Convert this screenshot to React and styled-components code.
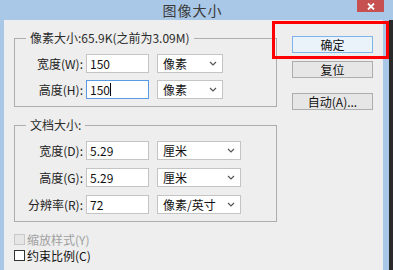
import styled, { createGlobalStyle } from 'styled-components';

const GlobalStyle = createGlobalStyle`
    html, body {
        margin: 0;
        padding: 0;
        background: #a9c7e6;
        font-family: "Noto Sans CJK SC", "Noto Sans", sans-serif;
    }
`

// finestra del dialogo
const Window = styled.div`
    position: relative;
    width: 393px;
    height: 270px;
    overflow: hidden;
    background: #a9c7e6;
    display: flex;
    flex-direction: column;
`
const TitleBar = styled.div`
    height: 20px;
    display: flex;
    align-items: center;
    justify-content: center;
    position: relative;
    font-size: 14px;
    color: #3a3a3a;
    letter-spacing: 1px;
    padding-right: 8px;
`
const CloseButton = styled.div`
    position: absolute;
    top: 0;
    left: 357px;
    width: 27px;
    height: 12px;
    background: #c75050;
    display: flex;
    align-items: center;
    justify-content: center;
`
const Frame = styled.div`
    flex: 1;
    display: flex;
`
const Body = styled.div`
    margin-left: 4px;
    width: 379px;
    background: #eeeeee;
    display: flex;
    padding: 11px 0 0 10px;
    box-sizing: border-box;
`
const RightEdge = styled.div`
    width: 6px;
    background: #a9c7e6;
    border-right: 4px solid #2a2a2a;
`
const LeftColumn = styled.div`
    width: 263px;
    display: flex;
    flex-direction: column;
`
const Group = styled.fieldset`
    margin: 0 0 ${p => p.$gap || 0}px 0;
    padding: 9px 0 7px 0;
    border: 1px solid #adadad;
    display: flex;
    flex-direction: column;
    gap: ${p => p.$rowGap}px;
`
const Legend = styled.legend`
    margin-left: 11px;
    padding: 0 4px;
    font-size: 12px;
    line-height: 14px;
    color: #2b2b2b;
`
const Row = styled.div`
    display: flex;
    align-items: center;
    height: 19px;
`
const Label = styled.div`
    width: 68px;
    text-align: right;
    font-size: 12px;
    color: #222;
    padding-right: 3px;
`
const Input = styled.div`
    width: 63px;
    height: 19px;
    box-sizing: border-box;
    background: #fff;
    border: 1px solid ${p => (p.$focus ? '#5a9ae0' : '#c4c4c4')};
    font-size: 12px;
    line-height: 17px;
    padding-left: 3px;
    color: #111;
    display: flex;
    align-items: center;
`
const Caret = styled.span`
    display: inline-block;
    width: 1px;
    height: 13px;
    background: #000;
`
const Select = styled.div`
    margin-left: 8px;
    width: ${p => p.$w}px;
    height: 19px;
    box-sizing: border-box;
    background: #fff;
    border: 1px solid #c4c4c4;
    font-size: 12px;
    padding: 0 5px 0 5px;
    display: flex;
    align-items: center;
    justify-content: space-between;
    color: #111;
`
const Check = styled.label`
    display: flex;
    align-items: center;
    height: 16px;
    font-size: 12px;
    color: ${p => (p.$disabled ? '#a0a0a0' : '#111')};
`
const Box = styled.span`
    width: 11px;
    height: 11px;
    box-sizing: border-box;
    border: 1px solid ${p => (p.$disabled ? '#c8c8c8' : '#333')};
    background: ${p => (p.$disabled ? '#e6e6e6' : '#fff')};
    margin: 0 2px 0 0;
`
const RightColumn = styled.div`
    margin-left: 15px;
    padding-top: 5px;
    display: flex;
    flex-direction: column;
`
const Button = styled.div`
    width: 81px;
    height: 17px;
    box-sizing: border-box;
    border: 1px solid ${p => (p.$primary ? '#7eb4ea' : '#adadad')};
    background: ${p => (p.$primary ? '#eaf2fa' : '#e6e6e6')};
    font-size: 12px;
    line-height: 15px;
    text-align: center;
    color: #111;
    margin-bottom: ${p => p.$mb}px;
`
const Highlight = styled.div`
    position: absolute;
    left: 272px;
    top: 21px;
    width: 117px;
    height: 38px;
    box-sizing: border-box;
    border: 3px solid #f00;
    pointer-events: none;
`

function Chevron() {
    return (
        <svg width="8" height="5" viewBox="0 0 8 5">
            <path d="M1 1 L4 4 L7 1" fill="none" stroke="#555" strokeWidth="1.2" />
        </svg>
    )
}

function CloseIcon() {
    return (
        <svg width="8" height="7" viewBox="0 0 8 7">
            <path d="M1 0.5 L7 6.5 M7 0.5 L1 6.5" stroke="#fff" strokeWidth="1.8" />
        </svg>
    )
}

function Field({ label, value, unit, w, focus }) {
    return (
        <Row>
            <Label>{label}</Label>
            <Input $focus={focus}>{value}{focus && <Caret />}</Input>
            <Select $w={w}><span>{unit}</span><Chevron /></Select>
        </Row>
    )
}

export default function App() {
    return (
        <Window>
            <GlobalStyle />
            <TitleBar>
                图像大小
                <CloseButton><CloseIcon /></CloseButton>
            </TitleBar>
            <Frame>
                <Body>
                    <LeftColumn>
                        <Group $gap={11} $rowGap={7}>
                            <Legend>像素大小:65.9K(之前为3.09M)</Legend>
                            <Field label="宽度(W):" value="150" unit="像素" w={66} />
                            <Field label="高度(H):" value="150" unit="像素" w={66} focus />
                        </Group>
                        <Group $gap={9} $rowGap={8}>
                            <Legend>文档大小:</Legend>
                            <Field label="宽度(D):" value="5.29" unit="厘米" w={84} />
                            <Field label="高度(G):" value="5.29" unit="厘米" w={84} />
                            <Field label="分辨率(R):" value="72" unit="像素/英寸" w={84} />
                        </Group>
                        <Check $disabled><Box $disabled />缩放样式(Y)</Check>
                        <Check><Box />约束比例(C)</Check>
                    </LeftColumn>
                    <RightColumn>
                        <Button $primary $mb={8}>确定</Button>
                        <Button $mb={15}>复位</Button>
                        <Button>自动(A)...</Button>
                    </RightColumn>
                </Body>
                <RightEdge />
            </Frame>
            <Highlight />
        </Window>
    )
}
